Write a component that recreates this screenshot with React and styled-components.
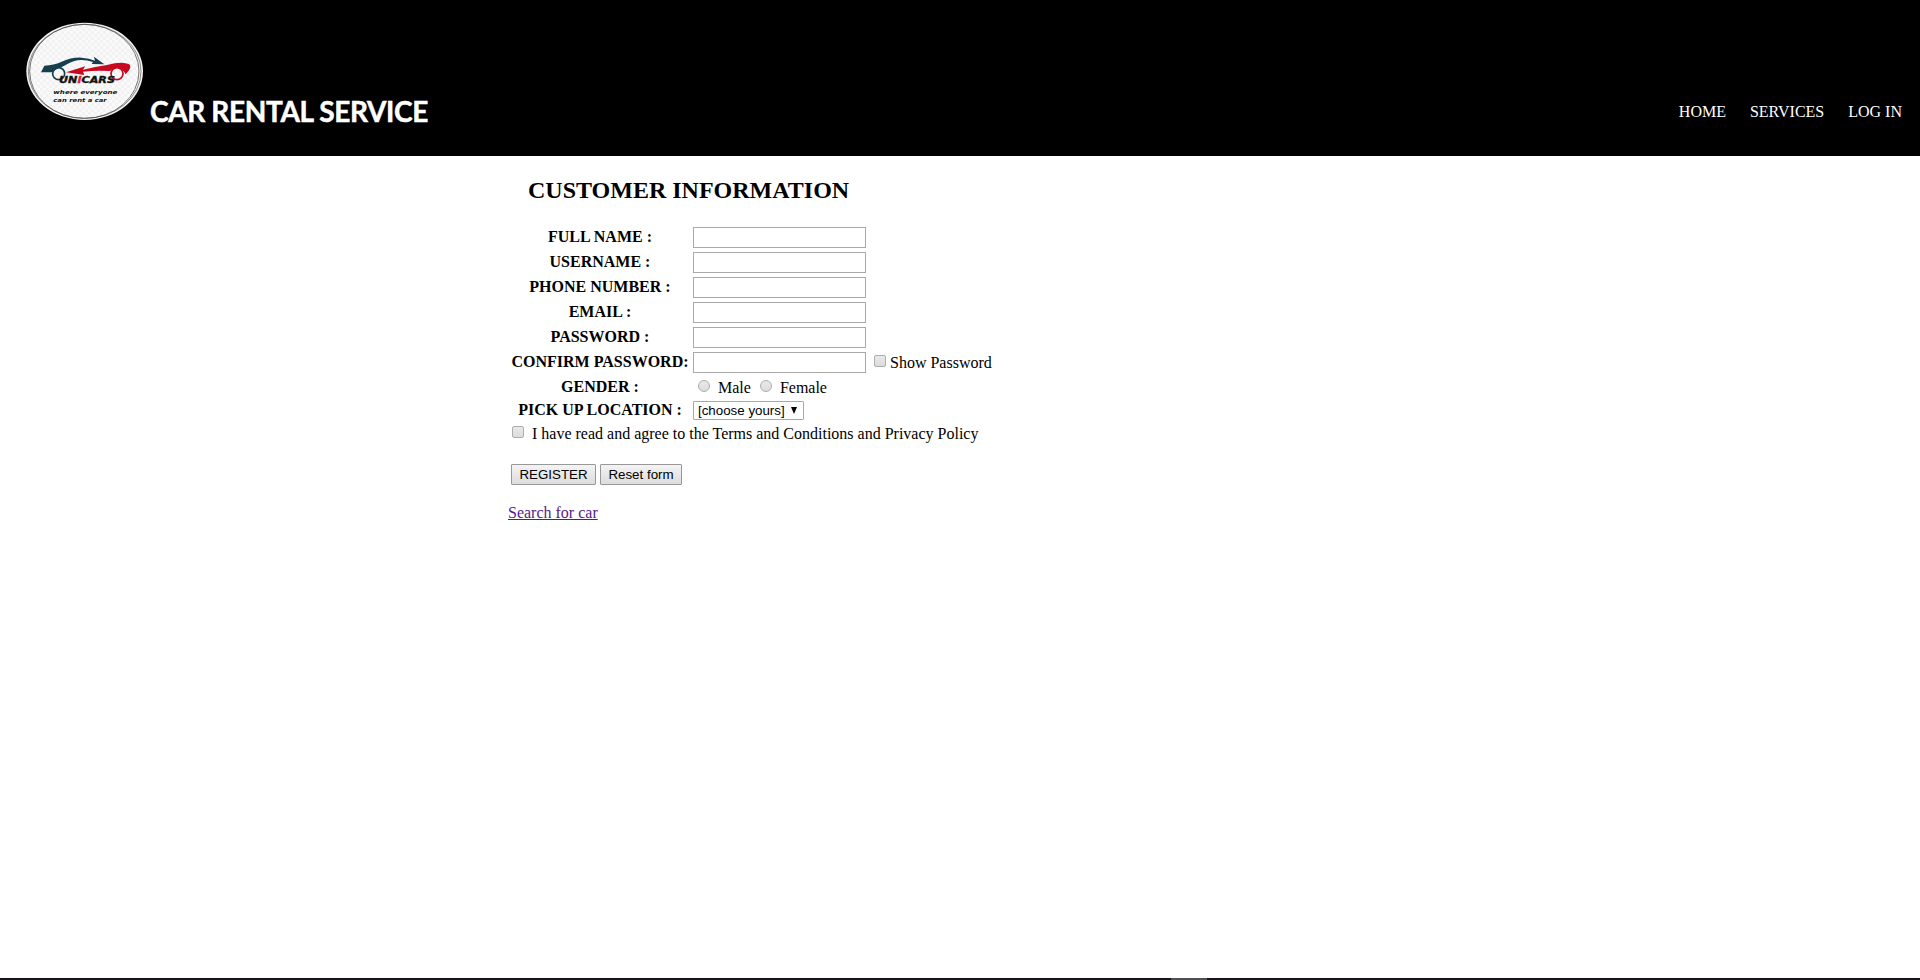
import React from "react";
import styled, { createGlobalStyle } from "styled-components";

const GlobalStyle = createGlobalStyle`
  * { box-sizing: border-box; }
  body {
    margin: 0;
    background: #fff;
    color: #000;
    font: 16px/18px "Liberation Serif", "Times New Roman", serif;
  }
`;

const Page = styled.div`
  display: flex;
  flex-direction: column;
  height: 980px;
  overflow: hidden;
`;

const Header = styled.header`
  display: flex;
  align-items: flex-start;
  height: 156px;
  flex: none;
  padding: 10px 18px 0 10px;
  background: #000;
  color: #fff;
`;

const LogoSvg = styled.svg`
  flex: none;
  width: 140px;
  height: 130px;
`;

const Brand = styled.div`
  flex: 1;
  margin-top: 83px;
  font: bold 28px/36px Lato, "Open Sans", sans-serif;
  letter-spacing: -0.36px;
  -webkit-text-stroke: 0.5px #fff;
  white-space: nowrap;
`;

const Nav = styled.nav`
  display: flex;
  gap: 24px;
  margin-top: 93px;
`;

const NavLink = styled.a`
  color: #fff;
  white-space: nowrap;
`;

const Main = styled.main`
  flex: 1;
  padding: 20px 0 0 508px;
`;

const Title = styled.h2`
  margin: 0 0 21px 20px;
  font-size: 24px;
  line-height: 28px;
`;

const Row = styled.div`
  display: flex;
  height: ${(p) => p.$height || 25}px;
  white-space: nowrap;
`;

const Label = styled.label`
  width: 185px;
  padding-right: 1px;
  line-height: ${(p) => p.$line || 24}px;
  font-weight: bold;
  text-align: center;
`;

const TextField = styled.input`
  width: 173px;
  height: 21px;
  margin: 2px 0 0;
  border: 1px solid #a9a9a9;
  background: #fff;
`;

const Tick = styled.input`
  appearance: none;
  flex: none;
  width: 12px;
  height: 12px;
  margin: ${(p) => p.$margin};
  border: 1px solid #adadad;
  border-radius: ${(p) => (p.type === "radio" ? "50%" : "2px")};
  background: linear-gradient(#e9e9e9, #dcdcdc);
`;

const Caption = styled.span`
  line-height: ${(p) => p.$line || 26}px;
`;

const Picker = styled.button`
  display: flex;
  align-items: center;
  justify-content: space-between;
  width: 111px;
  height: 19px;
  margin-top: 1px;
  padding: 0 6px 0 4px;
  border: 1px solid #a9a9a9;
  border-radius: 1px;
  background: #fff;
  color: #000;
  font: 13.333px/17px "Liberation Sans", Arial, sans-serif;
`;

const Arrow = styled.svg`
  width: 6px;
  height: 7px;
  margin-bottom: 1px;
`;

const Actions = styled.div`
  display: flex;
  gap: 4px;
  padding: 14px 0 0 3px;
`;

const Button = styled.button`
  width: ${(p) => p.$width}px;
  height: 21px;
  padding: 0;
  border: 1px solid #989898;
  border-radius: 1px;
  background: linear-gradient(#f4f4f4, #dcdcdc);
  color: #000;
  font: 13.333px/19px "Liberation Sans", Arial, sans-serif;
  white-space: nowrap;
`;

const SearchLink = styled.a`
  display: inline-block;
  margin-top: 19px;
  color: #551a8b;
  text-decoration: underline;
`;

const Taskbar = styled.footer`
  flex: none;
  height: 2px;
  padding-left: 1171px;
  background: #171519;
`;

const ActiveTask = styled.div`
  width: 36px;
  height: 2px;
  background: #504f51;
`;

function Logo() {
  return (
    <LogoSvg viewBox="0 0 420 390" role="img" aria-label="Unicars">
      <defs>
        <pattern id="checks" width="18" height="18" patternUnits="userSpaceOnUse">
          <rect width="18" height="18" fill="#fafafa" />
          <path d="M0 0h9v9H0zM9 9h9v9H9z" fill="#f2f2f2" />
        </pattern>
      </defs>
      <ellipse cx="224" cy="184" rx="175" ry="146" fill="#f4f1f2" />
      <ellipse cx="224" cy="184" rx="169" ry="141" fill="url(#checks)" stroke="#5a5455" strokeWidth="2" />
      <ellipse cx="223" cy="184" rx="164" ry="141" fill="none" stroke="#3a3637" strokeWidth="2" />
      <path d="M93 187 L103 167 Q132 166 153 156 Q187 141 215 143 Q238 145 255 152 L252 140 L283 163 L245 162 L249 156 Q218 146 193 153 Q174 159 160 169 Q140 176 126 187 Z" fill="#173f4d" />
      <circle cx="146" cy="191" r="18" fill="none" stroke="#173f4d" strokeWidth="5" />
      <path d="M168 187 L226 169 L219 179 Q257 170 291 165 Q336 153 358 163 Q365 171 356 182 L347 193 Q340 177 323 174 Q309 174 300 183 Q258 180 219 185 L223 195 Z" fill="#c8081f" />
      <circle cx="321" cy="191" r="18" fill="none" stroke="#c8081f" strokeWidth="5" />
      <g fontFamily="'DejaVu Sans', sans-serif" fontWeight="bold" fontStyle="italic" fill="#111">
        <text x="147" y="219" fontSize="25" textLength="168" lengthAdjust="spacingAndGlyphs" stroke="#111" strokeWidth="1">
          UN<tspan fill="#e02030" stroke="#e02030">I</tspan>CARS
        </text>
        <text x="130" y="251" fontSize="16" textLength="192" lengthAdjust="spacingAndGlyphs">where everyone</text>
        <text x="130" y="276" fontSize="16" textLength="160" lengthAdjust="spacingAndGlyphs">can rent a car</text>
      </g>
    </LogoSvg>
  );
}

const fields = [
  ["FULL NAME :", "text"],
  ["USERNAME :", "text"],
  ["PHONE NUMBER :", "tel"],
  ["EMAIL :", "email"],
  ["PASSWORD :", "password"],
];

export default function App() {
  return (
    <Page>
      <GlobalStyle />
      <Header>
        <Logo />
        <Brand>CAR RENTAL SERVICE</Brand>
        <Nav>
          <NavLink>HOME</NavLink>
          <NavLink>SERVICES</NavLink>
          <NavLink>LOG IN</NavLink>
        </Nav>
      </Header>
      <Main>
        <Title>CUSTOMER INFORMATION</Title>
        {fields.map(([name, type]) => (
          <Row key={name}>
            <Label>{name}</Label>
            <TextField type={type} aria-label={name} />
          </Row>
        ))}
        <Row>
          <Label>CONFIRM PASSWORD:</Label>
          <TextField type="password" />
          <Tick type="checkbox" $margin="5px 4px 0 8px" />
          <Caption>Show Password</Caption>
        </Row>
        <Row>
          <Label>GENDER :</Label>
          <Tick type="radio" name="gender" $margin="5px 8px 0 5px" />
          <Caption>Male</Caption>
          <Tick type="radio" name="gender" $margin="5px 8px 0 9px" />
          <Caption>Female</Caption>
        </Row>
        <Row $height={22}>
          <Label $line={20}>PICK UP LOCATION :</Label>
          <Picker type="button">
            [choose yours]
            <Arrow viewBox="0 0 6 7"><path d="M0 0h6L3 7z" /></Arrow>
          </Picker>
        </Row>
        <Row $height={28}>
          <Tick type="checkbox" $margin="4px 8px 0 4px" />
          <Caption $line={24}>I have read and agree to the Terms and Conditions and Privacy Policy</Caption>
        </Row>
        <Actions>
          <Button $width={85}>REGISTER</Button>
          <Button $width={82}>Reset form</Button>
        </Actions>
        <SearchLink>Search for car</SearchLink>
      </Main>
      <Taskbar>
        <ActiveTask />
      </Taskbar>
    </Page>
  );
}
